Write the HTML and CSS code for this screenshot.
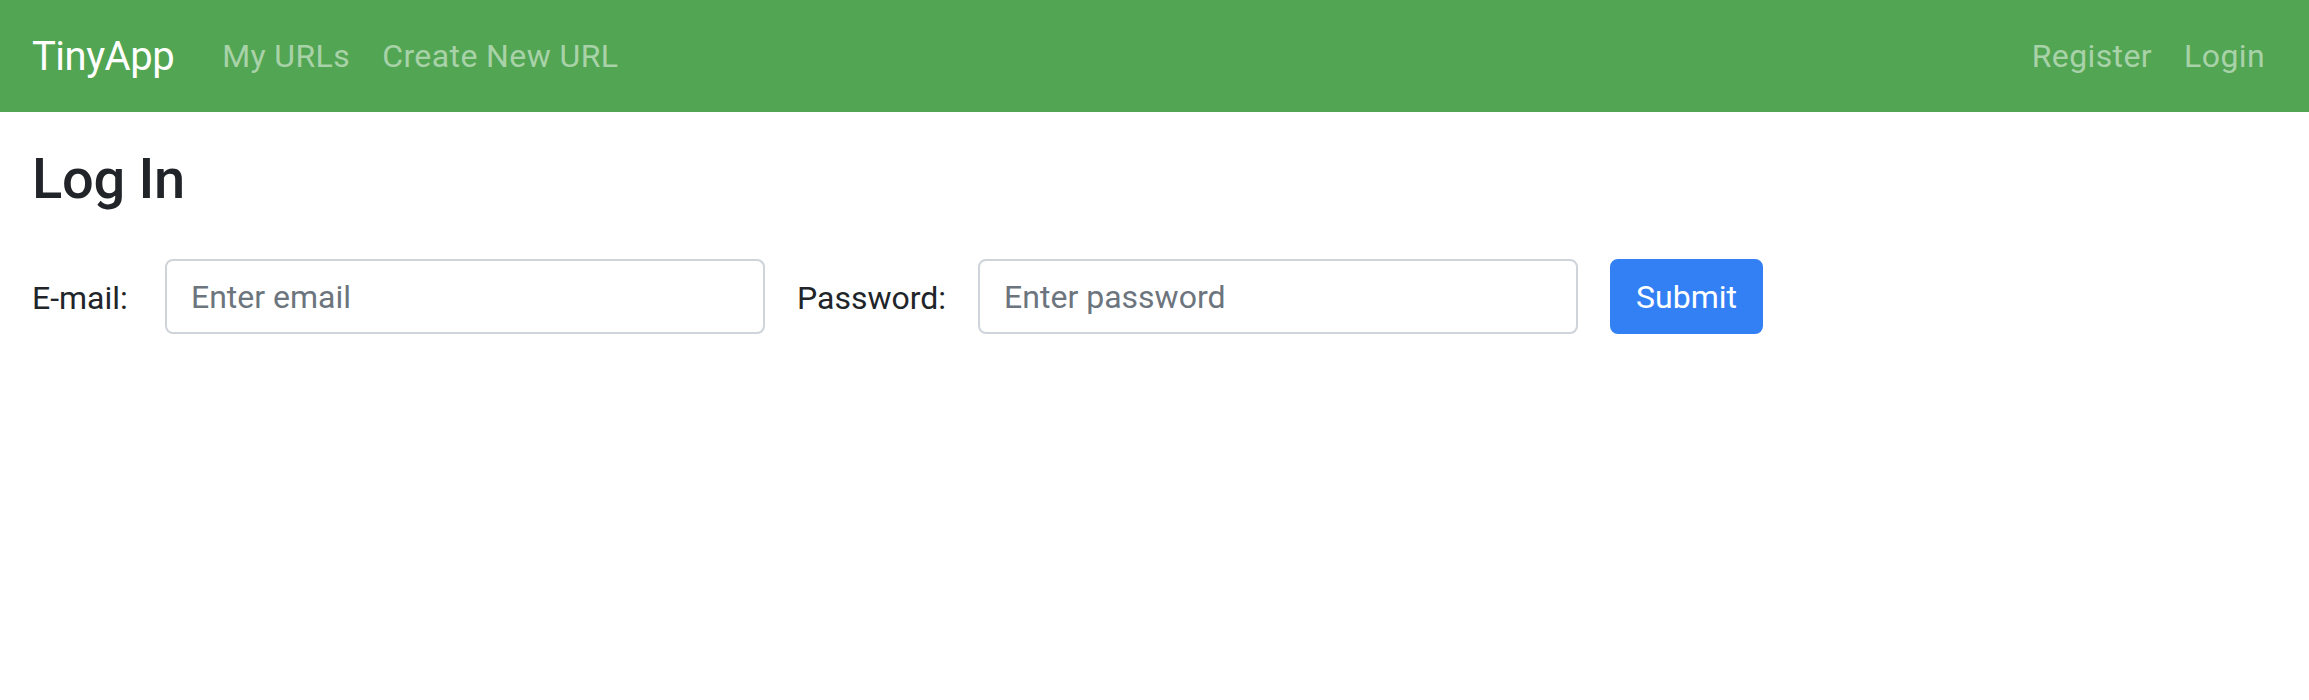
FILE: index.html
```html
<!DOCTYPE html>
<html lang="en">
<head>
<meta charset="utf-8">
<title>TinyApp</title>
<link rel="stylesheet" href="styles.css">
</head>
<body>
<nav class="navbar">
  <a class="brand" href="#">TinyApp</a>
  <ul class="nav">
    <li><a class="nav-link" href="#">My URLs</a></li>
    <li><a class="nav-link" href="#">Create New URL</a></li>
  </ul>
  <ul class="nav nav-right">
    <li><a class="nav-link" href="#">Register</a></li>
    <li><a class="nav-link" href="#">Login</a></li>
  </ul>
</nav>
<main class="content">
  <h3 class="title">Log In</h3>
  <form class="login-form">
    <label class="label label-email" for="email">E-mail:</label>
    <input class="field" id="email" type="email" placeholder="Enter email">
    <label class="label" for="password">Password:</label>
    <input class="field" id="password" type="password" placeholder="Enter password">
    <button class="btn" type="button">Submit</button>
  </form>
</main>
</body>
</html>
```

FILE: styles.css
```css
* { box-sizing: border-box; }
html, body { margin: 0; padding: 0; }
body {
  font-family: Roboto, "Liberation Sans", Arial, sans-serif;
  font-size: 32px;
  line-height: 1.5;
  color: #212529;
  background: #fff;
}
.navbar {
  display: flex;
  align-items: center;
  height: 112px;
  padding: 16px 28px 16px 32px;
  background: #52a552;
}
.brand {
  font-size: 40px;
  line-height: 60px;
  padding: 10px 0;
  margin-top: 2px;
  margin-right: 32px;
  letter-spacing: -0.5px;
  color: #fff;
  text-decoration: none;
}
.nav {
  display: flex;
  list-style: none;
  margin: 0;
  padding: 0;
}
.nav-right { margin-left: auto; }
.nav-link {
  display: block;
  padding: 16px;
  line-height: 48px;
  letter-spacing: 0.4px;
  color: rgba(255, 255, 255, 0.5);
  text-decoration: none;
}
.content {
  padding: 0 32px;
}
.title {
  margin: 34px 0 0;
  font-size: 56px;
  font-weight: 500;
  line-height: 67px;
  letter-spacing: -0.3px;
}
.login-form {
  display: flex;
  align-items: center;
  margin-top: 46px;
}
.label {
  margin-right: 32px;
  padding-top: 3px;
  line-height: 48px;
}
.label-email { min-width: 101px; }
.field {
  width: 600px;
  height: 75px;
  margin-right: 32px;
  padding: 12px 24px;
  font-family: inherit;
  font-size: 32px;
  line-height: 48px;
  color: #495057;
  border: 2px solid #ced4da;
  border-radius: 8px;
  background: #fff;
}
.field::placeholder { color: #6c757d; }
.btn {
  height: 75px;
  padding: 12px 24px;
  font-family: inherit;
  font-size: 32px;
  line-height: 48px;
  color: #fff;
  background: #3380f4;
  border: 2px solid #3380f4;
  border-radius: 8px;
}
```
